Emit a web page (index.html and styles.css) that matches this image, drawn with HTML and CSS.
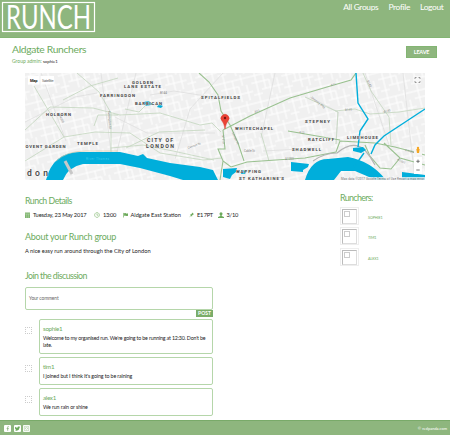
FILE: index.html
```html
<!DOCTYPE html>
<html lang="en">
<head>
<meta charset="utf-8">
<title>Runch</title>
<link rel="stylesheet" href="styles.css">
</head>
<body>
<header class="topbar">
  <svg class="logo" width="96" height="37" viewBox="0 0 96 37" role="img" aria-label="Runch">
    <rect x="2.500" y="2.500" width="92" height="29" fill="none" stroke="#fff" stroke-width="1.200"/>
    <text x="6" y="29" textLength="85" lengthAdjust="spacingAndGlyphs">RUNCH</text>
  </svg>
  <nav class="nav"><a>All Groups</a><a>Profile</a><a>Logout</a></nav>
</header>
<main class="page">
  <section class="group-head">
    <div>
      <h1>Aldgate Runchers</h1>
      <p class="admin">Group admin: <b>sophie1</b></p>
    </div>
    <button class="leave">LEAVE</button>
  </section>
  <svg class="map" width="400" height="107" viewBox="0 0 400 107">
    <defs>
      <pattern id="streets" width="31" height="27" patternUnits="userSpaceOnUse" patternTransform="rotate(-14)">
        <path d="M0 4H31M0 11H18M9 19H31M5 0V27M13 4V19M22 0V11M26 11V27M0 23H9M18 11V27" fill="none" stroke="#fff" stroke-width="1"/>
      </pattern>
    </defs>
    <rect width="400" height="107" fill="#f0f0f0"/>
    <rect width="400" height="107" fill="url(#streets)"/>
    <g fill="none" stroke="#dedede" stroke-width=".8">
      <path d="M16 0L41 68M76 0L87 87M111 0L90 87M198 0L165 36L150 86M250 0L236 65M340 0L364 72M0 49L50 24L72 20M90 44L122 60L190 60M238 78L276 76M285 24L313 39L311 71M378 0L390 107M125 22L149 18L200 26"/>
    </g>
    <g fill="none" stroke="#c3d6be" stroke-width=".8">
      <path d="M0 57L25 34L68 35L95 42L135 40L175 52L187 50L196 59M0 88L39 64L70 59L105 60L135 80L178 87L197 85M9 13L39 64M52 0L74 19L86 40V84M86 75L118 72L148 78L189 87M38 27L65 13L93 5M100 36L114 39L125 28M310 38L330 36L345 41L374 39L400 35M338 0L346 18L364 44L366 72M280 24L313 39L311 71M236 60L244 88M69 53L73 42L93 42M101 75L134 59L180 57"/>
    </g>
    <g fill="none" stroke="#9ac190" stroke-width="1.100">
      <path d="M174 0L184 9L193 22L196 38L205 52L213 70L219 88M198 57L225 43L265 25L302 14L326 7L331 0M198 57L200 76L193 76L198 88L206 94L222 89L280 85L311 79L315 68L350 70L370 74L400 82M263 58L315 67M198 88L195 107M359 70L375 85L400 92M375 85L366 96L355 95L345 83L340 72"/>
    </g>
    <path d="M288 88Q299 80 312 80Q327 67 339 76Q346 84 350 92" fill="none" stroke="#b5b5b5" stroke-width="1.200"/>
    <g fill="#00aedb">
      <path d="M21 107Q28 79 55 79H95L113 83L118 81L122 85L145 90L175 94L188 97L193 107H158L145 103L115 95L95 91H58Q43 94 38 107Z"/>
      <path d="M280 107Q286 86 303 86L323 84Q346 88 361 107H351L330 98H316L309 107Z"/>
      <path d="M198 96L212 95L211 99L207 102L205 106L198 104ZM216 97L222 98L220 101H216ZM266 89L284 91L283 94L278 97V99L266 98ZM328 75L338 74L341 77L336 80L328 78ZM119 29L123 28L128 31L126 32L121 33ZM134 31L138 33L136 35L132 34ZM377 99L400 102V107H377Z"/>
    </g>
    <path d="M331 0L333 30L343 46L335 58L333 74M400 36L359 63L350 72L346 81M339 80L329 94" fill="none" stroke="#00aedb" stroke-width="1.400"/>
    <path d="M40 88L47 101" stroke="#c8c8c8" stroke-width="3"/>
    <path d="M31 88Q42 78 60 78H93" fill="none" stroke="#d8c9a2" stroke-width=".6"/>
    <g class="road">
      <text x="61" y="86.500" textLength="23" fill="#3cc8e8">River Thames</text>
      <text transform="translate(34 42) rotate(68)">A4200</text>
      <text transform="translate(83 38) rotate(86)">Farringdon St</text>
      <text transform="translate(197 62) rotate(85)">A1210</text>
      <text transform="translate(207 60) rotate(66)">Leman St</text>
      <text transform="translate(230 40) rotate(-22)">A11</text>
      <text transform="translate(306 13) rotate(-16)">A11</text>
      <text transform="translate(274 60) rotate(8)">A13</text>
      <text transform="translate(163 76) rotate(-20)">Cannon St</text>
      <text transform="translate(286 25) rotate(38)">Stepney Way</text>
      <text x="219" y="79">Cable St</text><text x="260" y="87">A1203</text>
      <text transform="translate(380 78) rotate(14)">E India</text>
      <text transform="translate(372 87) rotate(28)">A1261</text>
      <text transform="translate(342 8) rotate(65)">B140</text>
      <text transform="translate(320 38) rotate(-5)">B140</text>
      <text transform="translate(359 40) rotate(-16)">B140</text>
      <text x="135" y="21">B144</text>
    </g>
    <g class="place">
      <text x="107" y="10.500" textLength="21">GOLDEN</text>
      <text x="99" y="15" textLength="37">LANE ESTATE</text>
      <text x="75" y="23.500" textLength="35">FARRINGDON</text>
      <text x="110" y="32" textLength="27">BARBICAN</text>
      <text x="21" y="43" textLength="25">HOLBORN</text>
      <text x=".5" y="75" textLength="40">OVENT GARDEN</text>
      <text x="52" y="72" textLength="21">TEMPLE</text>
      <text x="176" y="25.500" textLength="39">SPITALFIELDS</text>
      <text x="210" y="57" textLength="38">WHITECHAPEL</text>
      <text x="280" y="50" textLength="25">STEPNEY</text>
      <text x="283" y="67.500" textLength="26">RATCLIFF</text>
      <text x="322" y="66" textLength="31">LIMEHOUSE</text>
      <text x="267" y="78" textLength="29">SHADWELL</text>
      <text x="211" y="100" textLength="25">WAPPING</text>
      <text x="214" y="106.500" textLength="45">ST KATHARINE'S</text>
      <text class="city" x="122" y="69" textLength="26">CITY OF</text>
      <text class="city" x="121" y="75" textLength="28">LONDON</text>
      <text class="big" x="2" y="102.500" textLength="21">don</text>
    </g>
    <path d="M200 56Q199 50 197 48A4 4 0 1 1 203 48Q201 50 200 56Z" fill="#ea4335" stroke="#d8362a" stroke-width=".5"/>
    <circle cx="200" cy="45" r="1.200" fill="#761411"/>
    <rect x="3" y="3" width="26" height="8.500" fill="#fff"/>
    <path d="M15 3V11.500" stroke="#ddd" stroke-width=".5"/>
    <g class="control"><text x="5" y="8.700" textLength="7.500" font-weight="bold">Map</text><text x="17" y="8.700" textLength="11.500" fill="#666">Satellite</text></g>
    <rect x="388" y="3" width="8" height="8" fill="#f8f8f8"/>
    <path d="M390 6V4.500H391.500M393.500 4.500H395V6M395 8V9.500H393.500M391.500 9.500H390V8" fill="none" stroke="#777" stroke-width=".7"/>
    <rect x="389" y="72" width="8" height="10" fill="#f6f6f6"/>
    <circle cx="393" cy="75" r="1.200" fill="#f5a623"/><path d="M391.300 76H394.700L394 80H392Z" fill="#f5a623"/>
    <rect x="389" y="84" width="8" height="17" fill="#fff"/>
    <path d="M391.300 88.300H394.700M393 86.600V90M391.300 97H394.700" stroke="#555" stroke-width=".8"/>
    <rect x="316" y="104" width="84" height="3" fill="#f3f3f3" fill-opacity=".8"/>
    <text class="credit" x="316" y="106.500" textLength="83">Map data ©2017 Google  Terms of Use  Report a map error</text>
  </svg>
  <div class="columns">
    <section class="main-col">
      <h2 class="tight">Runch Details</h2>
      <ul class="details">
        <li><svg width="5" height="6" viewBox="0 0 5 6"><path d="M0 .5H5V6H0Z" fill="#7fb56f"/><path d="M0 2H5M1.700 2V6M3.400 2V6" stroke="#cfe3c8" stroke-width=".4"/></svg><span class="date">Tuesday, 23 May 2017</span></li>
        <li><svg width="6" height="6" viewBox="0 0 6 6"><path d="M3 .6A2.400 2.400 0 1 1 2.990 .6M3 1.500V3.200H4.300" fill="none" stroke="#8fc080" stroke-width=".7"/></svg><span class="time">13:00</span></li>
        <li><svg width="5" height="6" viewBox="0 0 6 6"><path d="M.5 .5V6" stroke="#7fb56f"/><path d="M1.300 1Q2.500 .3 3.500 1T6 1V4Q4.500 4.500 3.500 4T1.300 4Z" fill="#6caa5b"/></svg><span class="station">Aldgate East Station</span></li>
        <li><svg width="5" height="6" viewBox="0 0 6 6"><path d="M4 0L6 2L5 2.300L3.700 3.600V5L2.500 3.800L.2 6L2.100 3.400L1 2.300H2.400L3.700 1Z" fill="#6caa5b"/></svg><span class="code">E1 7PT</span></li>
        <li><svg width="6" height="6" viewBox="0 0 6 6"><circle cx="3" cy="1.700" r="1.500" fill="#6caa5b"/><path d="M2.300 3H3.700V4L6 5V6H0V5L2.300 4Z" fill="#6caa5b"/></svg><span class="count">3/10</span></li>
      </ul>
      <h2 class="about-title">About your Runch group</h2>
      <p class="about">A nice easy run around through the City of London</p>
      <h2 class="join">Join the discussion</h2>
      <div class="comment-field">Your comment</div>
      <button class="post">POST</button>
      <article class="comment"><i class="avatar"></i><div><h3>sophie1</h3><p class="welcome">Welcome to my organised run. We're going to be running at 12:30. Don't be<br>late.</p></div></article>
      <article class="comment short"><i class="avatar"></i><div><h3>tim1</h3><p>I joined but I think it's going to be raining</p></div></article>
      <article class="comment short"><i class="avatar"></i><div><h3>alex1</h3><p>We run rain or shine</p></div></article>
    </section>
    <aside class="runchers">
      <h2>Runchers:</h2>
      <div class="runner"><span class="photo"><i></i></span><b>SOPHIE1</b></div>
      <div class="runner"><span class="photo"><i></i></span><b>TIM1</b></div>
      <div class="runner"><span class="photo"><i></i></span><b>ALEX1</b></div>
    </aside>
  </div>
</main>
<footer class="footer">
  <div class="social">
    <svg width="7" height="7" viewBox="0 0 7 7"><rect width="7" height="7" rx="1" fill="#fff"/><path d="M4.700 1.500H4.300Q3.700 1.500 3.700 2.300V5.700M2.700 3.500H4.700" fill="none" stroke="#8eb87f" stroke-width=".9"/></svg>
    <svg width="7" height="7" viewBox="0 0 7 7"><rect width="7" height="7" rx="1" fill="#fff"/><path d="M1 1.700Q2.200 2.900 3.400 2.800Q3.700 1 5 1.500L6 1.700L5.500 3Q5 5.800 2.500 5.700L1 5.300L2 4.700L1 3.500Z" fill="#6caa5b"/></svg>
    <svg width="7" height="7" viewBox="0 0 7 7"><rect width="7" height="7" rx="1" fill="#fff"/><path d="M1.300 1.300H5.700V5.700H1.300ZM3.500 2.500A1 1 0 1 1 3.490 2.500" fill="none" stroke="#a9cb9e" stroke-width=".6"/></svg>
  </div>
  <span>© redpanda.com</span>
</footer>
</body>
</html>
```
FILE: styles.css
```css
* { box-sizing: border-box; }
body { margin: 0; width: 450px; height: 438px; overflow: hidden; background: #fff; color: #222; font-family: Lato, "Liberation Sans", sans-serif; font-size: 5.700px; }
h1, h2, h3, p, ul { margin: 0; padding: 0; }
button { border: 0; padding: 0; color: #fff; font-family: inherit; white-space: nowrap; }
.topbar { height: 38px; display: flex; justify-content: space-between; background: #8eb67e; border-bottom: 1px solid #83b573; }
.logo { display: block; overflow: visible; }
.logo text { font: 400 32px Lato, sans-serif; fill: #fff; }
.nav { display: flex; gap: 10px; padding: 1px 6.500px 0 0; font-size: 8.400px; line-height: 12px; letter-spacing: -.32px; color: #fff; }
.page { height: 382px; padding: 5px 25px 0; }
.group-head { height: 30px; display: flex; justify-content: space-between; }
.group-head > div { margin-left: -13px; }
h1, h2 { color: #6dab5e; font-weight: 400; white-space: nowrap; }
h1 { font-size: 10.300px; line-height: 13px; letter-spacing: -.32px; }
h2 { font-size: 8.800px; line-height: 12px; }
h2.tight { letter-spacing: -.5px; }
.admin { font-size: 5px; line-height: 9px; color: #6dab5e; padding-top: 1px; }
.admin b { font-size: 4.300px; color: #222; font-weight: 400; }
.leave { width: 31px; height: 12px; margin: 3px -12px 0 0; background: #8eb67e; border: 1px solid #83b573; font-size: 5.500px; font-weight: 700; letter-spacing: -.2px; }
.map { display: block; }
.place { font: 700 4.300px Roboto, sans-serif; fill: #444; stroke: #f4f4f4; stroke-width: .6px; paint-order: stroke; }
.place .city { font-size: 5.200px; }
.place .big { font-size: 8.500px; font-weight: 500; }
.road { font: 3px Roboto, sans-serif; fill: #888; }
.control { font: 4px Roboto, sans-serif; fill: #222; }
.credit { font: 3px Roboto, sans-serif; fill: #777; }
.columns { display: flex; justify-content: space-between; }
.main-col { width: 188px; padding-top: 15px; }
.details { display: flex; align-items: center; gap: 8px; list-style: none; height: 9px; margin-top: 3px; white-space: nowrap; }
.details li { display: flex; align-items: center; gap: 3px; flex: none; }
.details svg { flex: none; }
.date { width: 53px; letter-spacing: -.14px; }
.time { width: 11.500px; letter-spacing: -.3px; }
.station { width: 50.500px; }
.code { width: 12.500px; letter-spacing: -.4px; }
.count { letter-spacing: -.2px; }
.about-title { margin-top: 12px; font-size: 9px; letter-spacing: -.25px; }
.about { margin-top: 4px; line-height: 8px; font-size: 5.700px; letter-spacing: 0; white-space: nowrap; }
.join { margin-top: 15px; letter-spacing: -.55px; }
.comment-field { width: 188px; height: 23px; margin-top: 5px; padding: 7px 3px; border: 1px solid #b5d6aa; border-radius: 2px; line-height: 7px; font-size: 4.800px; letter-spacing: -.08px; color: #666; }
.post { display: block; width: 17px; height: 7px; margin: 0 0 0 auto; background: #7aad69; font-size: 5px; font-weight: 700; line-height: 7px; }
.comment { display: flex; justify-content: space-between; height: 35px; margin-top: 2px; }
.comment > div { width: 174px; border: 1px solid #b5d6aa; border-radius: 2px; padding: 5px 3px; }
.comment.short { height: 28px; margin-top: 3px; }
.comment h3 { font-size: 6.200px; line-height: 8px; letter-spacing: -.3px; font-weight: 400; color: #6dab5e; }
.comment p { font-size: 5.300px; line-height: 7px; margin-top: 2px; letter-spacing: -.12px; white-space: nowrap; }
.comment .welcome { letter-spacing: -.18px; }
.avatar { width: 7px; height: 7px; margin-top: 8px; border: 1px dotted #ccc; }
.runchers { width: 85px; padding-top: 12px; }
.runchers h2 { margin-bottom: 3px; font-size: 8.800px; letter-spacing: -.6px; }
.runner { display: flex; align-items: center; height: 18px; margin-bottom: 2.300px; gap: 9px; }
.photo { width: 19px; height: 18px; border: 1px solid #eee; padding: 1px; }
.photo i { display: block; width: 15px; height: 15px; border: 1px solid #bbb; border-right-color: #ddd; border-bottom-color: #ddd; }
.photo i::before { content: ""; display: block; width: 4px; height: 4px; margin: 1px; border: 1px solid #ccc; }
.runner b { padding-top: 3px; font-size: 3.700px; letter-spacing: -.1px; font-weight: 400; color: #6dab5e; }
.footer { height: 15px; display: flex; align-items: center; justify-content: space-between; padding: 0 3px 0 4px; background: #8eb67e; border-top: 1px solid #79aa69; color: #fff; font-size: 4px; }
.social { display: flex; gap: 2.500px; }
```
